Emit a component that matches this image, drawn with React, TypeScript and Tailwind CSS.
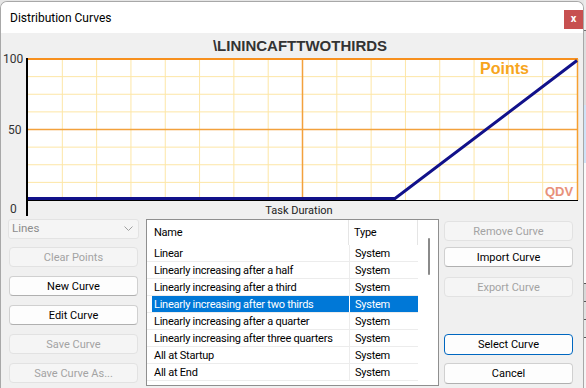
import React from "react";

const rows = [
  "Linear",
  "Linearly increasing after a half",
  "Linearly increasing after a third",
  "Linearly increasing after two thirds",
  "Linearly increasing after a quarter",
  "Linearly increasing after three quarters",
  "All at Startup",
  "All at End",
];

function Btn({
  label,
  disabled,
  primary,
  className,
}: {
  label: string;
  disabled?: boolean;
  primary?: boolean;
  className?: string;
}) {
  const base =
    "h-[20px] flex items-center justify-center rounded-[4px] border text-[11px] leading-none";
  const look = disabled
    ? "bg-[#f5f5f5] border-[#e2e2e2] text-[#a3a3a3]"
    : primary
    ? "bg-[#fdfdfd] border-[#0067c0] text-black"
    : "bg-[#fdfdfd] border-[#d0d0d0] border-b-[#b0b0b0] text-black";
  return <div className={`${base} ${look} ${className ?? ""}`}>{label}</div>;
}

function Chart() {
  const x0 = 28;
  const x1 = 577;
  const y0 = 59;
  const y1 = 200;
  const dx = (x1 - x0) / 16;
  const dy = (y1 - y0) / 8;
  const vMinor = Array.from({ length: 15 }, (_, i) => i + 1).filter((i) => i !== 8);
  const hMinor = Array.from({ length: 7 }, (_, i) => i + 1).filter((i) => i !== 4);
  const tf = 'Roboto, sans-serif';
  return (
    <svg width={581} height={185} viewBox="1 33 581 185" className="block">
      <rect x={x0} y={y0} width={x1 - x0} height={y1 - y0} fill="#ffffff" />
      {vMinor.map((i) => (
        <line
          key={"v" + i}
          x1={x0 + i * dx}
          x2={x0 + i * dx}
          y1={y0}
          y2={y1}
          stroke="#fde6a6"
          strokeWidth={1}
        />
      ))}
      {hMinor.map((j) => (
        <line
          key={"h" + j}
          x1={x0}
          x2={x1}
          y1={y0 + j * dy}
          y2={y0 + j * dy}
          stroke="#fde6a6"
          strokeWidth={1}
        />
      ))}
      <line x1={x0 + 8 * dx} x2={x0 + 8 * dx} y1={y0} y2={y1} stroke="#f3a13c" strokeWidth={1.5} />
      <line x1={x0} x2={x1} y1={y0 + 4 * dy} y2={y0 + 4 * dy} stroke="#f3a13c" strokeWidth={1.5} />
      <line x1={27} x2={578} y1={59} y2={59} stroke="#f7901e" strokeWidth={2} />
      <line x1={577.5} x2={577.5} y1={59} y2={200} stroke="#f7a030" strokeWidth={1.5} />
      <line x1={27} x2={27} y1={58} y2={216} stroke="#000" strokeWidth={2} />
      <line x1={27} x2={578} y1={200.5} y2={200.5} stroke="#000" strokeWidth={1} />
      <polyline
        points="28,198.5 395,198.5 577,60.5"
        fill="none"
        stroke="#11118a"
        strokeWidth={3}
      />
      <text x={300} y={51} textAnchor="middle" fontFamily='"Liberation Sans", Arial, sans-serif' fontWeight="bold" fontSize={15} fill="#333">
        \LININCAFTTWOTHIRDS
      </text>
      <text x={480} y={74} fontFamily='"Liberation Sans", Arial, sans-serif' fontWeight="bold" fontSize={16} fill="#f7a51c">
        Points
      </text>
      <text x={545} y={196} fontFamily='"Liberation Sans", Arial, sans-serif' fontWeight="bold" fontSize={13} fill="#e8917a">
        QDV
      </text>
      <text x={3} y={63} fontFamily={tf} fontSize={12} fill="#333">100</text>
      <text x={8} y={134} fontFamily={tf} fontSize={12} fill="#333">50</text>
      <text x={10} y={213} fontFamily={tf} fontSize={12} fill="#333">0</text>
      <text x={299} y={214} textAnchor="middle" fontFamily={tf} fontSize={11} fill="#222">Task Duration</text>
    </svg>
  );
}

export default function App() {
  return (
    <div className="w-[586px] h-[388px] bg-[#e6e6e6] flex overflow-hidden font-['Roboto',sans-serif]">
      <div className="mt-[1px] w-[584px] shrink-0 flex flex-col border border-b-0 border-[#a8a8a8] rounded-t-[7px] overflow-hidden bg-[#f0f0f0]">
        {/* title bar */}
        <div className="h-[31px] bg-white flex items-start justify-between shrink-0">
          <div className="pl-[9px] pt-[8px] text-[12px] leading-[16px] text-black">Distribution Curves</div>
          <div className="mt-[8px] w-[19px] h-[19px] bg-[#c75050] text-white flex items-center justify-center text-[11px] font-bold leading-none pb-[2px]">
            x
          </div>
        </div>
        <Chart />
        {/* bottom area */}
        <div className="flex items-start pl-[7px] pt-[1px]">
          <div className="w-[131px] flex flex-col">
            <div className="h-[20px] rounded-[3px] border border-[#e3e3e3] bg-[#f5f5f5] flex items-center justify-between pl-[3px] pr-[5px] text-[11.5px] text-[#8c8c8c]">
              <span>Lines</span>
              <svg width="9" height="6" viewBox="0 0 9 6">
                <path d="M0.5 0.5 L4.5 4.5 L8.5 0.5" fill="none" stroke="#a0a0a0" strokeWidth="1" />
              </svg>
            </div>
            <Btn label="Clear Points" disabled className="mt-[8px] mx-[1px]" />
            <Btn label="New Curve" className="mt-[9px] mx-[1px]" />
            <Btn label="Edit Curve" className="mt-[9px] mx-[1px]" />
            <Btn label="Save Curve" disabled className="mt-[9px] mx-[1px]" />
            <Btn label="Save Curve As..." disabled className="mt-[9px] mx-[1px]" />
          </div>
          {/* list */}
          <div className="ml-[7px] w-[293px] h-[167px] border border-[#8f8f8f] bg-white flex text-[11px] tracking-[-0.25px] text-black">
            <div className="w-[272px] flex flex-col">
              <div className="h-[25px] flex">
                <div className="w-[202px] border-r border-[#e5e5e5] pl-[7px] pt-[1px] flex items-center">Name</div>
                <div className="w-[69px] border-r border-[#e5e5e5] pl-[5px] pt-[1px] flex items-center">Type</div>
              </div>
              {rows.map((r, i) => {
                const sel = i === 3;
                return (
                  <div key={r} className="h-[17px] flex border-b border-[#ececec] w-[271px]">
                    <div className="w-[5px]" />
                    <div
                      className={`w-[197px] pl-[2px] flex items-center leading-none whitespace-nowrap ${
                        sel ? "bg-[#0078d7] text-white" : ""
                      }`}
                    >
                      {r}
                    </div>
                    <div className={`w-[1px] ${sel ? "bg-white" : "bg-[#ececec]"}`} />
                    <div
                      className={`w-[68px] pl-[5px] flex items-center leading-none ${
                        sel ? "bg-[#0078d7] text-white" : ""
                      }`}
                    >
                      System
                    </div>
                  </div>
                );
              })}
            </div>
            <div className="w-[19px] pt-[18px]">
              <div className="ml-[9px] w-[2px] h-[37px] bg-[#8a8a8a] rounded-full" />
            </div>
          </div>
          {/* right buttons */}
          <div className="ml-[5px] w-[129px] flex flex-col">
            <Btn label="Remove Curve" disabled className="mt-[2px]" />
            <Btn label="Import Curve" className="mt-[6px]" />
            <Btn label="Export Curve" disabled className="mt-[10px]" />
            <Btn label="Select Curve" primary className="mt-[37px] h-[21px]" />
            <Btn label="Cancel" className="mt-[8px] h-[21px]" />
          </div>
        </div>
      </div>
      <div className="flex-1 flex flex-col">
        <div className="h-[30px] bg-[#ececec]" />
        <div className="h-[1px] bg-[#707070]" />
        <div className="h-[74px] bg-[#dedede]" />
        <div className="h-[58px] bg-[#cfe3f7]" />
        <div className="h-[120px] bg-[#fafafa]" />
        <div className="h-[1px] bg-[#555]" />
        <div className="h-[17px] bg-[#d8d8d8]" />
        <div className="h-[1px] bg-[#555]" />
        <div className="h-[17px] bg-[#e0e0e0]" />
        <div className="h-[1px] bg-[#555]" />
        <div className="h-[17px] bg-[#e8e8e8]" />
        <div className="h-[1px] bg-[#555]" />
        <div className="flex-1 bg-[#f4f4f4]" />
      </div>
    </div>
  );
}
